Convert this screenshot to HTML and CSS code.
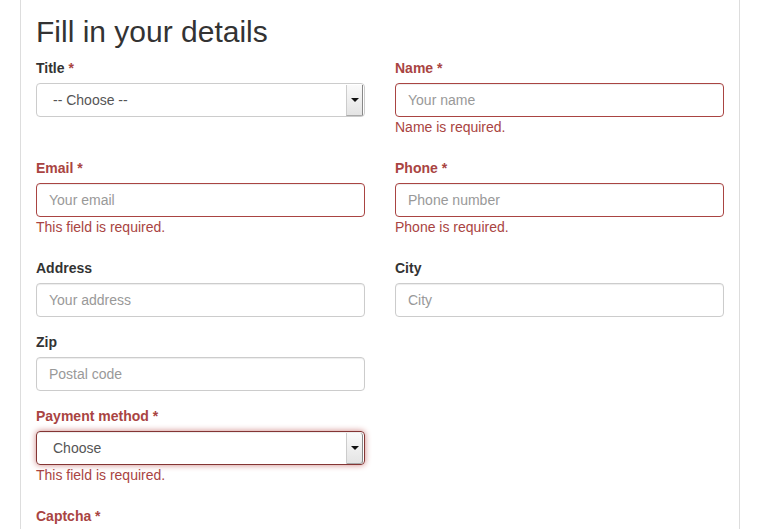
FILE: index.html
```html
<!DOCTYPE html>
<html>
<head>
<meta charset="utf-8">
<link rel="stylesheet" href="styles.css">
</head>
<body>
<div class="panel">
  <h2 class="heading">Fill in your details</h2>
  <div class="grid">
    <div class="group">
      <label class="label">Title <span class="req">*</span></label>
      <div class="select">
        <span class="select-text">-- Choose --</span>
        <span class="select-btn"><span class="caret"></span></span>
      </div>
    </div>
    <div class="group has-error">
      <label class="label">Name *</label>
      <div class="input"><span class="ph">Your name</span></div>
      <div class="help">Name is required.</div>
    </div>

    <div class="group has-error">
      <label class="label">Email *</label>
      <div class="input"><span class="ph">Your email</span></div>
      <div class="help">This field is required.</div>
    </div>
    <div class="group has-error">
      <label class="label">Phone *</label>
      <div class="input"><span class="ph">Phone number</span></div>
      <div class="help">Phone is required.</div>
    </div>

    <div class="group">
      <label class="label">Address</label>
      <div class="input"><span class="ph">Your address</span></div>
    </div>
    <div class="group">
      <label class="label">City</label>
      <div class="input"><span class="ph">City</span></div>
    </div>

    <div class="group">
      <label class="label">Zip</label>
      <div class="input"><span class="ph">Postal code</span></div>
    </div>
    <div class="group"></div>

    <div class="group has-error">
      <label class="label">Payment method *</label>
      <div class="select focus-error">
        <span class="select-text">Choose</span>
        <span class="select-btn"><span class="caret"></span></span>
      </div>
      <div class="help">This field is required.</div>
    </div>
    <div class="group"></div>

    <div class="group has-error">
      <label class="label">Captcha *</label>
    </div>
  </div>
</div>
</body>
</html>
```
FILE: styles.css
```css
html, body {
  margin: 0;
  padding: 0;
  background: #fff;
}
body {
  font-family: "Liberation Sans", Arial, sans-serif;
  font-size: 14px;
  line-height: 20px;
  color: #333;
  height: 529px;
  overflow: hidden;
}
.panel {
  margin-left: 20px;
  border-left: 1px solid #ddd;
  border-right: 1px solid #ddd;
  padding: 15px 15px 0 15px;
  box-sizing: border-box;
  width: 720px;
  min-height: 600px;
}
.heading {
  margin: 0 0 10px 0;
  font-size: 30px;
  font-weight: 500;
  line-height: 33px;
  color: #333;
}
.grid {
  display: grid;
  grid-template-columns: 329px 329px;
  column-gap: 30px;
  width: 688px;
}
.group {
  margin-bottom: 15px;
}
.label {
  display: block;
  font-weight: bold;
  margin-bottom: 5px;
  line-height: 20px;
}
.req {
  color: #a94442;
}
.has-error .label {
  color: #a94442;
}
.input {
  height: 34px;
  box-sizing: border-box;
  border: 1px solid #ccc;
  border-radius: 4px;
  padding: 6px 12px;
  box-shadow: inset 0 1px 1px rgba(0,0,0,.075);
}
.has-error .input {
  border-color: #a94442;
}
.ph {
  color: #999;
}
.help {
  color: #a94442;
  line-height: 20px;
  margin-bottom: 6px;
}
.select {
  height: 34px;
  box-sizing: border-box;
  border: 1px solid #ccc;
  border-radius: 4px;
  display: flex;
  align-items: stretch;
  color: #555;
  overflow: hidden;
}
.select-text {
  flex: 1;
  padding: 6px 0 6px 16px;
}
.select-btn {
  width: 15px;
  margin: 1px 1px 0 0;
  border-left: 1px solid #ccc;
  background: linear-gradient(#fafafa, #e4e4e4);
  border-bottom: 1px solid #aaa;
  border-right: 1px solid #888;
  display: flex;
  align-items: center;
  justify-content: center;
}
.caret {
  width: 0;
  height: 0;
  border-left: 4px solid transparent;
  border-right: 4px solid transparent;
  border-top: 4px solid #111;
}
.focus-error {
  border-color: #843534;
  box-shadow: inset 0 1px 1px rgba(0,0,0,.075), 0 0 6px #ce8483;
  overflow: visible;
}
.focus-error .select-btn {
  border-radius: 0 3px 3px 0;
}
```
